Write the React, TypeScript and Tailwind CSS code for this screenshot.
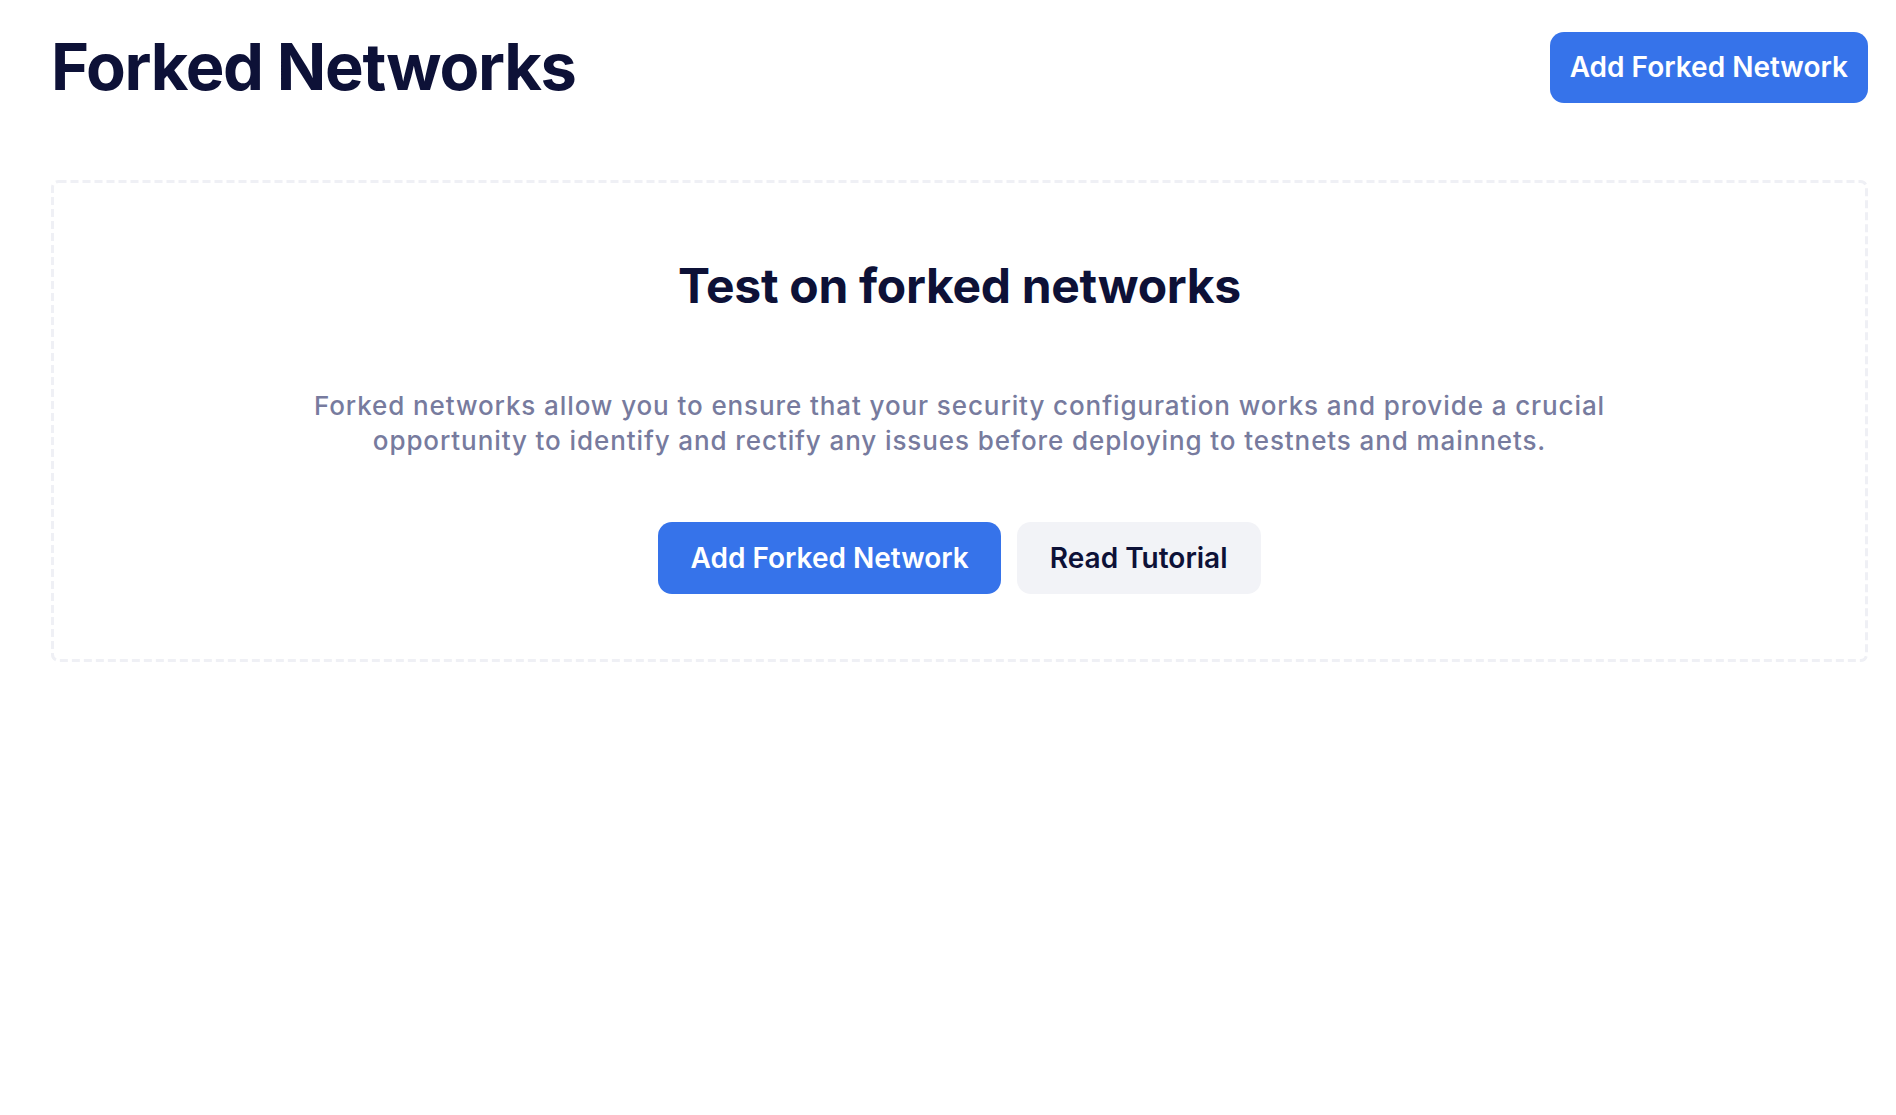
import React from "react";

export default function App() {
  return (
    <div
      className="min-h-screen w-full bg-white pl-[51px] pr-[28px] pt-[31px]"
      style={{ fontFamily: "Inter, 'Noto Sans', sans-serif" }}
    >
      <div className="flex items-center justify-between">
        <h1 className="text-[65px] leading-[72px] font-bold tracking-[-1.3px] text-[#0d1137]">
          Forked Networks
        </h1>
        <button className="h-[71px] rounded-[14px] bg-[#3673ea] px-[20px] text-[28px] font-semibold text-white">
          Add Forked Network
        </button>
      </div>

      <div className="relative mt-[77px] flex flex-col items-center px-8 pt-[77px] pb-[68px]">
        <svg className="pointer-events-none absolute inset-0 h-full w-full" aria-hidden="true">
          <rect
            x="1.5"
            y="1.5"
            width="calc(100% - 3px)"
            height="calc(100% - 3px)"
            rx="6"
            fill="none"
            stroke="#eff0f5"
            strokeWidth="3"
            strokeDasharray="8 4"
          />
        </svg>
        <h2 className="text-[48px] leading-[58px] font-bold tracking-[-0.3px] text-[#0d1137]">
          Test on forked networks
        </h2>
        <p className="mt-[73px] max-w-[1360px] text-center text-[26px] leading-[35px] font-medium tracking-[0.9px] text-[#777b9e]">
          Forked networks allow you to ensure that your security configuration works and provide a crucial
          <br />
          opportunity to identify and rectify any issues before deploying to testnets and mainnets.
        </p>
        <div className="mt-[64px] flex gap-[16px]">
          <button className="h-[72px] rounded-[14px] bg-[#3673ea] px-[32px] text-[28px] font-semibold text-white">
            Add Forked Network
          </button>
          <button className="h-[72px] rounded-[14px] bg-[#f2f3f7] px-[33px] text-[28px] font-semibold text-[#0d1137]">
            Read Tutorial
          </button>
        </div>
      </div>
    </div>
  );
}
